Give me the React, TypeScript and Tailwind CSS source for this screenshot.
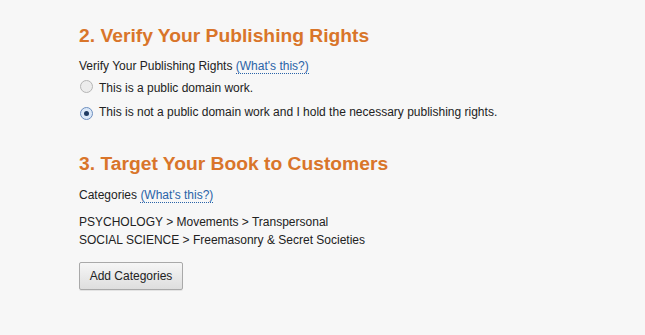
import React from "react";

function Radio({ checked }: { checked?: boolean }) {
  return (
    <span
      className={`inline-flex h-[13px] w-[13px] shrink-0 items-center justify-center rounded-full border ${
        checked ? "border-[#6d8fbf] bg-[#dbe8f8]" : "border-[#b5b5b5] bg-[#ececec]"
      }`}
    >
      {checked && <span className="h-[5px] w-[5px] rounded-full bg-[#1f3b63]" />}
    </span>
  );
}

function Help() {
  return (
    <span className="text-[#2a63a8] border-b border-dotted border-[#2a63a8] leading-[14px]">(What's this?)</span>
  );
}

export default function App() {
  return (
    <div className="min-h-[335px] w-[645px] bg-[#f7f7f7] font-['Liberation_Sans',Arial,sans-serif] text-[12px] text-[#222] pl-[79px] pt-[24px]">
      <h2 className="text-[19.25px] font-bold text-[#d9752a] leading-[24px]">2. Verify Your Publishing Rights</h2>
      <div className="mt-[11px] leading-[15px]">
        Verify Your Publishing Rights <Help />
      </div>
      <label className="mt-[6px] flex items-center gap-[6px] leading-[15px]">
        <span className="ml-[1px]"><Radio /></span>
        This is a public domain work.
      </label>
      <label className="mt-[8px] flex items-center gap-[6px] leading-[15px]">
        <span className="ml-[1px]"><Radio checked /></span>
        This is not a public domain work and I hold the necessary publishing rights.
      </label>

      <h2 className="mt-[32px] text-[19.25px] font-bold text-[#d9752a] leading-[24px]">3. Target Your Book to Customers</h2>
      <div className="mt-[12px] leading-[15px]">
        Categories <Help />
      </div>
      <div className="mt-[10px] leading-[18px]">
        <div>PSYCHOLOGY &gt; Movements &gt; Transpersonal</div>
        <div>SOCIAL SCIENCE &gt; Freemasonry &amp; Secret Societies</div>
      </div>
      <button className="mt-[13px] h-[28px] w-[104px] rounded-[2px] border border-[#a9a9a9] bg-gradient-to-b from-[#f6f6f6] to-[#dedede] text-[12px] text-[#222] shadow-[0_1px_0_rgba(0,0,0,0.08)]">
        Add Categories
      </button>
    </div>
  );
}
